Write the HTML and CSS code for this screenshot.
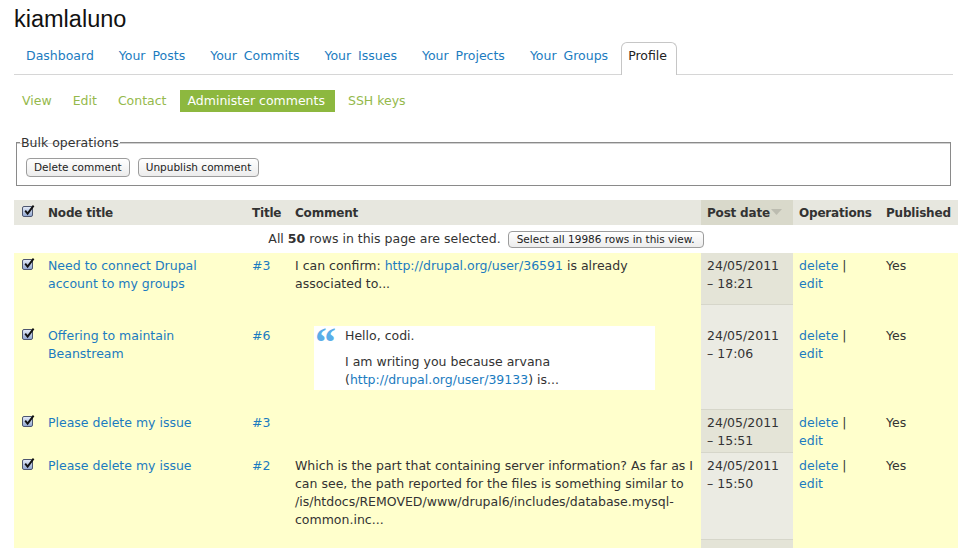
FILE: index.html
```html
<!DOCTYPE html>
<html lang="en">
<head>
<meta charset="utf-8">
<title>kiamlaluno</title>
<link rel="stylesheet" href="styles.css">
</head>
<body>
<div class="page">
  <h1 class="title">kiamlaluno</h1>
  <ul class="tabs primary">
    <li><a href="#">Dashboard</a></li>
    <li><a href="#">Your Posts</a></li>
    <li><a href="#">Your Commits</a></li>
    <li><a href="#">Your Issues</a></li>
    <li><a href="#">Your Projects</a></li>
    <li><a href="#">Your Groups</a></li>
    <li class="active"><a href="#">Profile</a></li>
  </ul>
  <ul class="tabs secondary">
    <li><a href="#">View</a></li>
    <li><a href="#">Edit</a></li>
    <li><a href="#">Contact</a></li>
    <li class="active"><a href="#">Administer comments</a></li>
    <li><a href="#">SSH keys</a></li>
  </ul>
  <fieldset class="bulk">
    <legend>Bulk operations</legend>
    <div class="bulk-buttons">
      <button type="button" class="btn">Delete comment</button>
      <button type="button" class="btn">Unpublish comment</button>
    </div>
  </fieldset>
  <table class="views">
    <colgroup>
      <col class="w-check"><col class="w-node"><col class="w-title"><col class="w-comment"><col class="w-date"><col class="w-ops"><col class="w-pub">
    </colgroup>
    <thead>
      <tr>
        <th class="c-check"><span class="cb"><svg viewBox="0 0 12 12" width="12" height="12"><path d="M2.2 5.6 L4.6 8.6 L10.6 0.6" fill="none" stroke="#111" stroke-width="1.9"/></svg></span></th>
        <th>Node title</th>
        <th>Title</th>
        <th>Comment</th>
        <th class="sorted">Post date<svg class="sort-arrow" viewBox="0 0 11 6" width="11" height="6"><path d="M0 0 H11 L5.5 6 Z" fill="#bcbcb0"/></svg></th>
        <th>Operations</th>
        <th>Published</th>
      </tr>
    </thead>
    <tbody>
      <tr class="select-all">
        <td colspan="7">All <strong>50</strong> rows in this page are selected. <button type="button" class="btn btn-small">Select all 19986 rows in this view.</button></td>
      </tr>
      <tr class="row odd">
        <td class="c-check"><span class="cb"><svg viewBox="0 0 12 12" width="12" height="12"><path d="M2.2 5.6 L4.6 8.6 L10.6 0.6" fill="none" stroke="#111" stroke-width="1.9"/></svg></span></td>
        <td><a href="#">Need to connect Drupal account to my groups</a></td>
        <td><a href="#">#3</a></td>
        <td><p>I can confirm: <a href="#">http://drupal.org/user/36591</a> is already associated to...</p></td>
        <td class="sorted">24/05/2011 – 18:21</td>
        <td><a href="#">delete</a> | <a href="#">edit</a></td>
        <td>Yes</td>
      </tr>
      <tr class="row even">
        <td class="c-check"><span class="cb"><svg viewBox="0 0 12 12" width="12" height="12"><path d="M2.2 5.6 L4.6 8.6 L10.6 0.6" fill="none" stroke="#111" stroke-width="1.9"/></svg></span></td>
        <td><a href="#">Offering to maintain Beanstream</a></td>
        <td><a href="#">#6</a></td>
        <td><blockquote><p>Hello, codi.</p><p>I am writing you because arvana (<a href="#">http://drupal.org/user/39133</a>) is...</p></blockquote></td>
        <td class="sorted">24/05/2011 – 17:06</td>
        <td><a href="#">delete</a> | <a href="#">edit</a></td>
        <td>Yes</td>
      </tr>
      <tr class="row odd">
        <td class="c-check"><span class="cb"><svg viewBox="0 0 12 12" width="12" height="12"><path d="M2.2 5.6 L4.6 8.6 L10.6 0.6" fill="none" stroke="#111" stroke-width="1.9"/></svg></span></td>
        <td><a href="#">Please delete my issue</a></td>
        <td><a href="#">#3</a></td>
        <td></td>
        <td class="sorted">24/05/2011 – 15:51</td>
        <td><a href="#">delete</a> | <a href="#">edit</a></td>
        <td>Yes</td>
      </tr>
      <tr class="row even">
        <td class="c-check"><span class="cb"><svg viewBox="0 0 12 12" width="12" height="12"><path d="M2.2 5.6 L4.6 8.6 L10.6 0.6" fill="none" stroke="#111" stroke-width="1.9"/></svg></span></td>
        <td><a href="#">Please delete my issue</a></td>
        <td><a href="#">#2</a></td>
        <td><p>Which is the part that containing server information? As far as I can see, the path reported for the files is something similar to /is/htdocs/REMOVED/www/drupal6/includes/database.mysql-common.inc...</p></td>
        <td class="sorted">24/05/2011 – 15:50</td>
        <td><a href="#">delete</a> | <a href="#">edit</a></td>
        <td>Yes</td>
      </tr>
      <tr class="row odd">
        <td class="c-check"><span class="cb"><svg viewBox="0 0 12 12" width="12" height="12"><path d="M2.2 5.6 L4.6 8.6 L10.6 0.6" fill="none" stroke="#111" stroke-width="1.9"/></svg></span></td>
        <td><a href="#">Please delete my issue</a></td>
        <td><a href="#">#1</a></td>
        <td><blockquote><p>Hi, could you please delete this issue?</p></blockquote></td>
        <td class="sorted">24/05/2011 – 15:48</td>
        <td><a href="#">delete</a> | <a href="#">edit</a></td>
        <td>Yes</td>
      </tr>
    </tbody>
  </table>
</div>
</body>
</html>
```

FILE: styles.css
```css
html, body {
  margin: 0;
  padding: 0;
  background: #fff;
}
body {
  font: 12.5px/18px "DejaVu Sans", Verdana, sans-serif;
  color: #333;
  overflow: hidden;
}
a {
  color: #1b7bc0;
  text-decoration: none;
}
.page {
  padding: 0 17px 0 14px;
}
.title {
  font: normal 23.5px/30px "Liberation Sans", Arial, sans-serif;
  color: #111;
  margin: 4px 0 8px;
}
.tabs {
  list-style: none;
  margin: 0;
  padding: 0;
  display: flex;
}
.primary {
  border-bottom: 1px solid #d6d6d6;
  margin-right: 5px;
}
.primary li {
  margin-right: 1px;
}
.primary a {
  display: block;
  padding: 4px 11px 9px;
  border: 1px solid transparent;
  border-bottom: 0;
  color: #1b7bc0;
  word-spacing: 3px;
}
.primary .active a {
  color: #222;
  background: #fff;
  border-color: #c6c6c6;
  border-radius: 6px 6px 0 0;
  padding: 4px 9px 10px 6px;
  margin-bottom: -1px;
}
.secondary {
  margin-top: 15px;
}
.secondary a {
  display: block;
  padding: 2px 8px;
  margin-right: 5px;
  color: #95b94c;
}
.secondary .active a {
  background: #8db83f;
  color: #fff;
  padding-right: 10px;
}
.bulk {
  margin: 21px 7px 0 2px;
  padding: 7px 9px 8px;
  border: 1px solid #8a8a8a;
  box-shadow: inset 0 1px 0 #d0d0d0;
}
.bulk legend {
  padding: 0 1px;
  margin-left: -6px;
  color: #333;
  position: relative;
  top: 1px;
}
.bulk-buttons {
  display: flex;
  gap: 8px;
}
.btn {
  font: 10.5px/13px "DejaVu Sans", Verdana, sans-serif;
  color: #222;
  padding: 2px 7px;
  border: 1px solid #9c9c9c;
  border-radius: 4px;
  background: linear-gradient(#ffffff, #ececec);
  margin: 0;
}
.btn-small {
  padding: 1px 8px;
  margin-left: 3px;
}
.views {
  width: 944px;
  margin-top: 14px;
  border-collapse: collapse;
  table-layout: fixed;
}
.w-check { width: 28px; }
.w-node { width: 204px; }
.w-title { width: 43px; }
.w-comment { width: 412px; }
.w-date { width: 92px; }
.w-ops { width: 87px; }
.w-pub { width: 78px; }
.views th {
  text-align: left;
  background: #e7e7df;
  padding: 4px 6px 3px;
  font-size: 12px;
  letter-spacing: -0.2px;
  font-weight: bold;
  color: #333;
  vertical-align: baseline;
  white-space: nowrap;
}
.views th.sorted {
  background: #d9d9cb;
}
.sort-arrow {
  margin-left: 1px;
  vertical-align: 2px;
}
.views .c-check {
  padding-left: 8px;
  padding-right: 0;
}
.cb {
  display: inline-block;
  width: 9px;
  height: 9px;
  border: 1px solid #4d5670;
  border-radius: 2px;
  background: linear-gradient(#e2e9f6, #93a9d2);
  position: relative;
  vertical-align: baseline;
}
.cb svg {
  display: block;
  position: absolute;
  left: 0;
  top: -2px;
  overflow: visible;
}
.select-all td {
  text-align: center;
  padding: 5px 6px;
  background: #fff;
}
.row td {
  padding: 4px 6px 2px;
  vertical-align: baseline;
  background: #ffffcc;
}
.row td.c-check {
  padding-left: 8px;
  padding-right: 0;
}
.row td.sorted {
  background: #e4e4d7;
  border-bottom: 1px solid #d6d6ca;
}
.row.even td.sorted {
  background: #ebebe3;
}
.row p {
  margin: 0 0 9px;
}
.row blockquote {
  position: relative;
  margin: 18px 40px 17px 19px;
  padding: 1px 10px 1px 31px;
  background: #fff;
}
.row blockquote::before {
  content: "\201C";
  position: absolute;
  left: 1px;
  top: -5px;
  font: bold 42px/1 "Liberation Serif", "Times New Roman", serif;
  color: #5aade8;
}
.row blockquote p {
  margin: 0 0 8px;
}
.row blockquote p:last-child {
  margin-bottom: 0;
}
```
